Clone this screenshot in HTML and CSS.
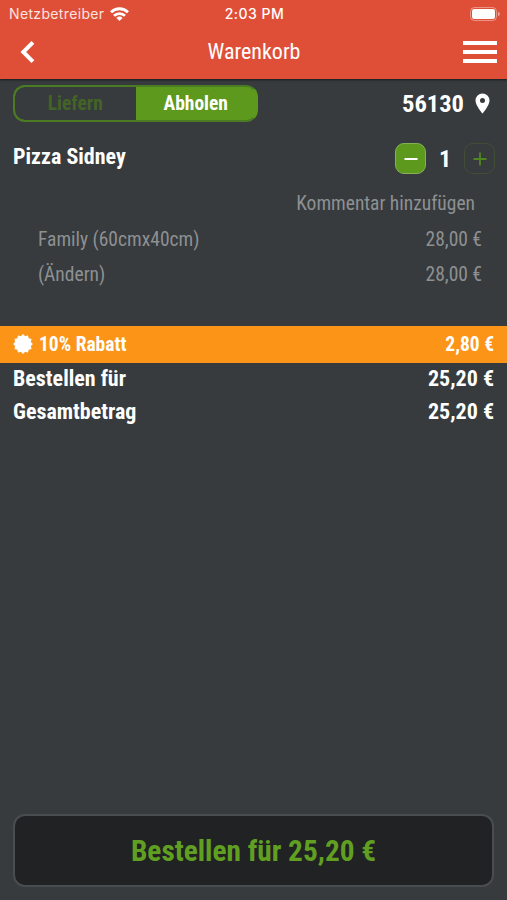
FILE: index.html
```html
<!DOCTYPE html>
<html lang="de">
<head>
    <meta charset="UTF-8">
    <meta name="viewport" content="width=device-width, initial-scale=1.0">
    <title>Warenkorb</title>
    <link rel="stylesheet" href="styles.css">
</head>
<body>
    <header class="header">
        <div class="status-bar">
            <div class="carrier">
                <span>Netzbetreiber</span>
                <svg class="wifi" width="19" height="14" viewBox="0 0 19 14" fill="none" stroke="#fff" stroke-width="2.8">
                    <path d="M1 5.2a12.2 12.2 0 0 1 17 0"/>
                    <path d="M4 8.8a7.8 7.8 0 0 1 11 0"/>
                    <path d="M9.5 14L6.4 10.9a4.4 4.4 0 0 1 6.2 0z" fill="#fff" stroke="none"/>
                </svg>
            </div>
            <div class="time">2:03 PM</div>
            <svg class="battery" width="30" height="14" viewBox="0 0 30 14">
                <rect x="0.5" y="0.5" width="26" height="13" rx="4" fill="none" stroke="#fff" stroke-opacity="0.4"/>
                <rect x="2" y="2" width="23" height="10" rx="2.2" fill="#fff"/>
                <path d="M28 4.7c2.4 1 2.4 3.6 0 4.6z" fill="#fff" fill-opacity="0.5"/>
            </svg>
        </div>
        <div class="nav-bar">
            <svg class="back" width="15" height="22" viewBox="0 0 15 22" fill="none" stroke="#fff" stroke-width="4">
                <path d="M12.9 1.4L3.3 11l9.6 9.6"/>
            </svg>
            <h1 class="title"><span class="text">Warenkorb</span></h1>
            <div class="menu">
                <span></span>
                <span></span>
                <span></span>
            </div>
        </div>
    </header>

    <main class="cart">
        <div class="delivery">
            <div class="switch">
                <div class="option"><span class="text">Liefern</span></div>
                <div class="option active"><span class="text">Abholen</span></div>
            </div>
            <div class="zip">
                <span class="text">56130</span>
                <svg width="15" height="21" viewBox="0 0 15 21">
                    <path fill="#fff" fill-rule="evenodd" d="M7.5 0.5A7 7 0 0 0 0.5 7.5C0.5 12.5 7.5 20.5 7.5 20.5S14.5 12.5 14.5 7.5A7 7 0 0 0 7.5 0.5zM7.5 5A2.5 2.5 0 1 1 7.5 10A2.5 2.5 0 0 1 7.5 5z"/>
                </svg>
            </div>
        </div>

        <div class="product">
            <span class="text name">Pizza Sidney</span>
            <div class="counter">
                <button class="minus">
                    <svg width="14" height="14" viewBox="0 0 14 14" stroke="#fff" stroke-width="2"><path d="M0.5 7h13"/></svg>
                </button>
                <span class="text count">1</span>
                <button class="plus">
                    <svg width="14" height="14" viewBox="0 0 14 14" stroke="#4f8620" stroke-width="1.8"><path d="M0.5 7h13M7 0.5v13"/></svg>
                </button>
            </div>
        </div>

        <div class="comment"><span class="text">Kommentar hinzufügen</span></div>
        <div class="detail">
            <span class="text">Family (60cmx40cm)</span>
            <span class="text">28,00 €</span>
        </div>
        <div class="detail">
            <span class="text">(Ändern)</span>
            <span class="text">28,00 €</span>
        </div>

        <div class="discount">
            <div class="label">
                <svg width="20" height="20" viewBox="-10 -10 20 20">
                    <g fill="#fff">
                        <rect x="-7" y="-7" width="14" height="14" transform="rotate(15)"/>
                        <rect x="-7" y="-7" width="14" height="14" transform="rotate(45)"/>
                        <rect x="-7" y="-7" width="14" height="14" transform="rotate(75)"/>
                    </g>
                </svg>
                <span class="text">10% Rabatt</span>
            </div>
            <span class="text">2,80 €</span>
        </div>
        <div class="sum">
            <span class="text">Bestellen für</span>
            <span class="text">25,20 €</span>
        </div>
        <div class="sum">
            <span class="text">Gesamtbetrag</span>
            <span class="text">25,20 €</span>
        </div>
    </main>

    <footer class="footer">
        <button class="order"><span class="text">Bestellen für 25,20 €</span></button>
    </footer>
</body>
</html>
```
FILE: styles.css
```css
* {
    box-sizing: border-box;
}

body {
    display: flex;
    flex-direction: column;
    height: 900px;
    margin: 0;
    overflow: hidden;
    background-color: #373b3e;
    color: #fff;
    font-family: "Roboto Condensed", Roboto, sans-serif;
    font-stretch: 75%;
}

button {
    padding: 0;
    font: inherit;
}

svg {
    display: block;
}

.text {
    white-space: nowrap;
}

.header {
    height: 79px;
    background-color: #df4f37;
    box-shadow: 0 1px 2px rgba(0, 0, 0, 0.6);
}

.status-bar {
    display: grid;
    grid-template-columns: 1fr auto 1fr;
    align-items: center;
    height: 27px;
    padding: 0 7px 0 9px;
    font-family: Inter, sans-serif;
    font-stretch: 100%;
    font-size: 14px;
}

.carrier {
    display: flex;
    align-items: center;
    gap: 6px;
    color: #fbe3df;
    letter-spacing: 0.35px;
}

.time {
    font-weight: 500;
    letter-spacing: 0.5px;
}

.battery {
    justify-self: end;
}

.nav-bar {
    display: grid;
    grid-template-columns: 55px 1fr 55px;
    align-items: center;
    height: 50px;
    padding: 0 10px 0 20px;
}

.title {
    margin: 0 9px 0 0;
    padding-bottom: 1px;
    text-align: center;
    font-size: 22px;
    font-weight: 400;
}

.menu {
    display: flex;
    flex-direction: column;
    justify-self: end;
    gap: 5px;
    width: 34px;
}

.menu span {
    height: 4px;
    background-color: #fff;
}

.delivery {
    display: flex;
    justify-content: space-between;
    align-items: center;
    height: 49px;
    padding: 0 17px 0 13px;
}

.switch {
    display: flex;
    width: 245px;
    height: 37px;
    border: 2px solid #4b7b23;
    border-radius: 12px;
    background-color: #5c991c;
    overflow: hidden;
    font-size: 19.5px;
    font-weight: 700;
}

.switch:has(.active) {
    border-right-color: #5c991c;
}

.option {
    display: flex;
    flex: 1;
    align-items: center;
    justify-content: center;
    background-color: #373b3e;
    color: #436426;
}

.option.active {
    background-color: #5c991c;
    color: #fff;
}

.zip {
    display: flex;
    align-items: center;
    gap: 11px;
    font-size: 24.5px;
    font-weight: 700;
}

.product {
    display: flex;
    justify-content: space-between;
    height: 58px;
    padding: 15px 12px 0 13px;
}

.name {
    padding-top: 1px;
    font-size: 22px;
    font-weight: 700;
}

.counter {
    display: flex;
    align-items: center;
    height: 31px;
}

.counter button {
    display: flex;
    align-items: center;
    justify-content: center;
    width: 31px;
    height: 31px;
    border-radius: 9px;
}

.minus {
    background-color: #5c991c;
    border: 1px solid #85b157;
}

.plus {
    background-color: transparent;
    border: 1px solid #414e36;
}

.count {
    width: 38px;
    text-align: center;
    font-size: 24px;
    font-weight: 700;
}

.comment {
    height: 35px;
    padding-right: 32px;
    line-height: 35px;
    text-align: right;
    font-size: 19.5px;
    color: #8e9092;
}

.detail {
    display: flex;
    justify-content: space-between;
    height: 35px;
    padding: 0 25px 0 38px;
    line-height: 38px;
    font-size: 19.5px;
    color: #8e9092;
}

.discount {
    display: flex;
    align-items: center;
    justify-content: space-between;
    height: 37px;
    margin-top: 35px;
    padding: 0 13px 1px;
    background-color: #fc9418;
    font-size: 19.5px;
    font-weight: 700;
}

.label {
    display: flex;
    align-items: center;
    gap: 6px;
}

.sum {
    display: flex;
    justify-content: space-between;
    height: 33px;
    padding: 0 13px;
    line-height: 31px;
    font-size: 22px;
    font-weight: 700;
}

.footer {
    margin-top: auto;
    padding: 0 13px 13px;
}

.order {
    display: block;
    width: 100%;
    height: 73px;
    background-color: #202223;
    border: 2px solid #4a4d4f;
    border-radius: 12px;
    color: #619f22;
    font-size: 29.3px;
    font-weight: 700;
}
```
